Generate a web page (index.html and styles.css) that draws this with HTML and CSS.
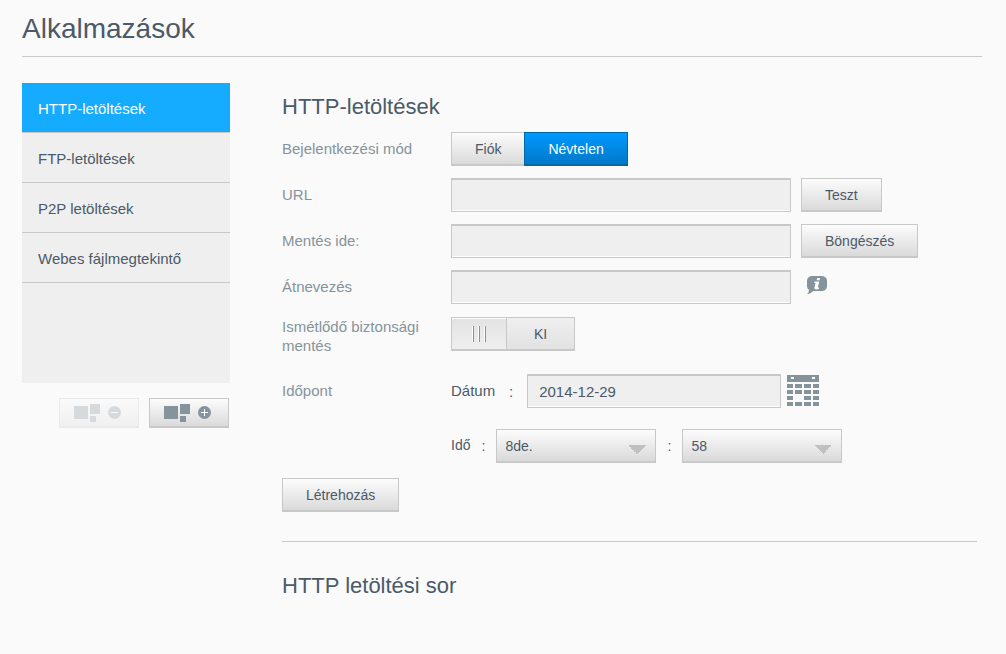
FILE: index.html
```html
<!DOCTYPE html>
<html lang="hu">
<head>
<meta charset="utf-8">
<meta name="viewport" content="width=device-width, initial-scale=1">
<title>Alkalmazások</title>
<link rel="stylesheet" href="styles.css">
</head>
<body>
<header class="page-header">
  <h1 class="page-title">Alkalmazások</h1>
</header>
<div class="layout">
  <aside class="sidebar">
    <nav class="app-list">
      <a class="app-link app-link-active" href="#http" aria-current="page">HTTP-letöltések</a>
      <a class="app-link" href="#ftp">FTP-letöltések</a>
      <a class="app-link" href="#p2p">P2P letöltések</a>
      <a class="app-link" href="#web">Webes fájlmegtekintő</a>
    </nav>
    <div class="app-actions">
      <button class="icon-button" type="button" aria-label="Alkalmazás eltávolítása" disabled>
        <svg class="icon" width="48" height="18" viewBox="0 0 48 18" aria-hidden="true">
          <path fill="#85939c" d="M0 2h14v13H0zM16 0h10v10H16zM16 12h6v6h-6z"/>
          <circle cx="40.500" cy="8.500" r="6.500" fill="#85939c"/>
          <path fill="#fff" d="M37 8h7v1h-7z"/>
        </svg>
      </button>
      <button class="icon-button" type="button" aria-label="Alkalmazás hozzáadása">
        <svg class="icon" width="48" height="18" viewBox="0 0 48 18" aria-hidden="true">
          <path fill="#85939c" d="M0 2h14v13H0zM16 0h10v10H16zM16 12h6v6h-6z"/>
          <circle cx="40.500" cy="8.500" r="6.500" fill="#85939c"/>
          <path fill="#fff" d="M37 8h7v1h-7zM40 5h1v7h-1z"/>
        </svg>
      </button>
    </div>
  </aside>
  <main class="content">
    <h2 class="section-title">HTTP-letöltések</h2>
    <form class="download-form">
      <div class="row" role="radiogroup" aria-labelledby="login-label">
        <span class="label" id="login-label">Bejelentkezési mód</span>
        <div class="segments">
          <label class="segment"><input class="hidden-input" type="radio" name="login">Fiók</label>
          <label class="segment"><input class="hidden-input" type="radio" name="login" checked>Névtelen</label>
        </div>
      </div>
      <div class="row">
        <label class="label" for="url">URL</label>
        <div class="controls">
          <input class="text-input" id="url" type="text">
          <button class="button" type="button">Teszt</button>
        </div>
      </div>
      <div class="row">
        <label class="label" for="target">Mentés ide:</label>
        <div class="controls">
          <input class="text-input" id="target" type="text">
          <button class="button" type="button">Böngészés</button>
        </div>
      </div>
      <div class="row">
        <label class="label" for="rename">Átnevezés</label>
        <div class="controls">
          <input class="text-input" id="rename" type="text">
          <button class="plain-button info-button" type="button" aria-label="Információ">
            <svg class="icon" width="20" height="18" viewBox="0 0 20 18" aria-hidden="true">
              <path fill="#85939c" d="M6 0h8c4 0 6 2 6 5v5c0 3-2 5-6 5H6c-1 1-3 3-6 3 1-1 2-2 2-4-1-1-2-2-2-4V5c0-3 2-5 6-5z"/>
              <path fill="#fff" d="M10.200 2h2.800l-.5 2.300H9.700zM7.600 5.500h4.700l-1.500 6h1.400l-.4 1.500c-2.200.8-4.900.8-4.300-1.500L8.600 7H7.200z"/>
            </svg>
          </button>
        </div>
      </div>
      <div class="row row-tall">
        <label class="label label-wrap" for="recurring">Ismétlődő biztonsági mentés</label>
        <label class="switch">
          <input class="hidden-input" id="recurring" type="checkbox" role="switch">
          <span class="switch-grip">
            <svg class="icon" width="15" height="17" viewBox="0 0 15 17" aria-hidden="true">
              <path fill="#fff" d="M0 0h1v16H0zM6 0h1v16H6zM12 0h1v16h-1z"/>
              <path fill="#85939c" d="M1 0h1v16H1zM7 0h1v16H7zM13 0h1v16h-1z"/>
            </svg>
          </span>
          <span class="switch-state">KI</span>
        </label>
      </div>
      <div class="row">
        <span class="label">Időpont</span>
        <div class="date-field">
          <label class="field-name" for="date">Dátum</label>
          <span class="colon">:</span>
          <input class="text-input date-input" id="date" type="text" value="2014-12-29">
          <button class="plain-button calendar-button" type="button" aria-label="Naptár">
            <svg class="icon" width="32" height="31" viewBox="0 0 32 31" aria-hidden="true">
              <path fill="#85939c" fill-rule="evenodd" d="M0 0h32v7H0zM4 2v2h3V2zM25 2v2h3V2z"/>
              <path fill="#85939c" d="M0 9h6v4H0zM8 9h7v4H8zM17 9h7v4h-7zM26 9h6v4h-6zM0 15h6v4H0zM8 15h7v4H8zM17 15h7v4h-7zM26 15h6v4h-6zM0 21h6v4H0zM17 21h7v4h-7zM26 21h6v4h-6zM0 27h6v4H0zM8 27h7v4H8zM17 27h7v4h-7zM26 27h6v4h-6z"/>
            </svg>
          </button>
        </div>
      </div>
      <div class="row row-time">
        <div class="time-field">
          <label class="field-name" for="hour">Idő</label>
          <span class="colon">:</span>
          <select class="select" id="hour"><option>8de.</option></select>
          <span class="colon">:</span>
          <select class="select" id="minute" aria-label="Perc"><option>58</option></select>
        </div>
      </div>
      <button class="button" type="button">Létrehozás</button>
    </form>
    <section class="queue">
      <h2 class="section-title">HTTP letöltési sor</h2>
    </section>
  </main>
</div>
</body>
</html>
```

FILE: styles.css
```css
* {
  box-sizing: border-box;
}

body {
  margin: 0;
  padding: 0 24px 0 22px;
  background: #fafafa;
  color: #4b5a68;
  font: 15px/19px "Liberation Sans", Arial, sans-serif;
}

button,
input,
select {
  font: inherit;
  color: inherit;
}

.page-header {
  padding: 13px 0 11px;
  border-bottom: 1px solid #c8c8c8;
}

.page-title {
  margin: 0;
  font-size: 28px;
  line-height: 32px;
  font-weight: 400;
}

.layout {
  display: flex;
  gap: 52px;
  padding: 26px 5px 0 0;
}

.sidebar {
  flex: 0 0 208px;
}

.app-list {
  min-height: 300px;
  background: #efefef;
}

.app-link {
  display: block;
  padding: 16px 16px 14px;
  border-bottom: 1px solid #c8c8c8;
  color: inherit;
  text-decoration: none;
}

.app-link-active {
  background: #15abff;
  background-clip: padding-box;
  color: #fff;
}

.app-actions {
  display: flex;
  justify-content: flex-end;
  gap: 10px;
  padding: 15px 1px 0 0;
}

.button,
.icon-button,
.segment,
.select {
  border: 1px solid #c8c8c8;
  border-bottom-width: 2px;
  border-radius: 0;
  background: linear-gradient(#fcfcfc, #dadada);
}

.icon-button {
  display: flex;
  align-items: center;
  justify-content: center;
  width: 80px;
  height: 30px;
  padding: 0 2px 0 0;
}

.icon-button:disabled {
  opacity: 0.3;
}

.icon {
  display: block;
}

.content {
  flex: 1;
  min-width: 0;
}

.section-title {
  margin: 0;
  font-size: 22px;
  line-height: 26px;
  font-weight: 400;
}

.content > .section-title {
  padding: 11px 0 12px;
}

.download-form {
  display: flow-root;
}

.row {
  display: grid;
  grid-template-columns: 169px 1fr;
  align-items: center;
  margin-bottom: 12px;
}

.row-tall {
  align-items: start;
  margin-bottom: 19px;
  padding-top: 1px;
}

.row-time {
  margin: 21px 0 15px;
}

.label {
  padding-bottom: 2px;
  color: #85939c;
}

.label-wrap {
  padding: 0 24px 0 0;
}

.controls,
.segments,
.date-field,
.time-field {
  display: flex;
  align-items: center;
}

.controls {
  gap: 10px;
}

.button {
  display: block;
  height: 34px;
  padding: 2px 23px 0;
  font-size: 14px;
}

.segment {
  height: 34px;
  padding: 7px 23px;
  font-size: 14px;
}

.segment:first-child {
  border-right: 0;
}

.segment:has(:checked) {
  border-color: #0067a8;
  background: linear-gradient(#0099ff, #0079c8);
  color: #fff;
}

.hidden-input {
  position: absolute;
  opacity: 0;
  pointer-events: none;
}

.text-input {
  flex: 0 1 340px;
  min-width: 0;
  height: 34px;
  padding: 0 11px 1px;
  border: 1px solid #c8c8c8;
  border-top-width: 2px;
  border-radius: 0;
  background: #efefef;
  box-shadow: inset 0 -1px #fff;
}

.plain-button {
  padding: 0;
  border: 0;
  background: none;
}

.info-button {
  padding: 0 6px 5px;
}

.calendar-button {
  padding-bottom: 2px;
}

.switch {
  display: flex;
  justify-self: start;
  height: 34px;
  border: 1px solid #c8c8c8;
  border-bottom-width: 2px;
  background: linear-gradient(#e2e2e2, #efefef);
}

.switch-grip {
  display: flex;
  align-items: center;
  justify-content: center;
  width: 54px;
  border-top: 1px solid #fff;
}

.switch-state {
  width: 68px;
  padding-top: 7px;
  border-left: 1px solid #c8c8c8;
  background: linear-gradient(#efefef, #e2e2e2);
  text-align: center;
  font-size: 14px;
}

.date-input {
  flex-basis: 254px;
  margin-right: 6px;
}

.field-name {
  padding-bottom: 1px;
}

.colon {
  width: 32px;
  text-align: center;
}

.time-field {
  grid-column: 2;
  font-size: 14px;
}

.time-field .colon {
  width: 26px;
}

.select {
  appearance: none;
  flex: 0 1 160px;
  min-width: 0;
  height: 34px;
  padding: 2px 8px 0;
  background:
    linear-gradient(to top right, transparent 50%, #c0c0c0 0) right 18px top 15px / 9px 9px no-repeat,
    linear-gradient(to top left, transparent 50%, #c0c0c0 0) right 9px top 15px / 9px 9px no-repeat,
    linear-gradient(#fcfcfc, #dadada);
}

.queue {
  margin-top: 29px;
  padding-top: 31px;
  border-top: 1px solid #c8c8c8;
}
```
